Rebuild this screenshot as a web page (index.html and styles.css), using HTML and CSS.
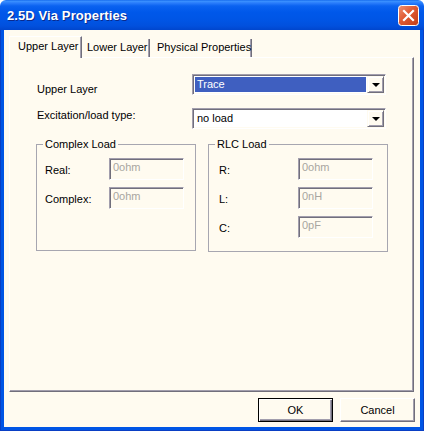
FILE: index.html
```html
<!DOCTYPE html>
<html>
<head>
<meta charset="utf-8">
<link rel="stylesheet" href="styles.css">
</head>
<body>
<div class="window">
  <div class="titlebar">
    <span class="title">2.5D Via Properties</span>
    <span class="close">
      <svg width="21" height="21" viewBox="0 0 21 21">
        <defs>
          <linearGradient id="cg" x1="0" y1="0" x2="1" y2="1">
            <stop offset="0" stop-color="#f09272"/>
            <stop offset="0.45" stop-color="#e05a32"/>
            <stop offset="1" stop-color="#c13c16"/>
          </linearGradient>
        </defs>
        <rect x="0.5" y="0.5" width="20" height="20" rx="3" fill="url(#cg)" stroke="#ffffff"/>
        <path d="M6 6 L15 15 M15 6 L6 15" stroke="#ffffff" stroke-width="2.2" stroke-linecap="square"/>
      </svg>
    </span>
  </div>
  <div class="frame">
    <div class="client">
      <div class="tabs">
        <div class="tab active">Upper Layer</div>
        <div class="tab t2">Lower Layer</div>
        <div class="tab t3">Physical Properties</div>
      </div>
      <div class="panel">
        <div class="row r1">
          <span class="lbl l1">Upper Layer</span>
          <div class="select">
            <span class="sel-text hl">Trace</span>
            <span class="drop"><span class="arrow"></span></span>
          </div>
        </div>
        <div class="row r2">
          <span class="lbl l2">Excitation/load type:</span>
          <div class="select">
            <span class="sel-text">no load</span>
            <span class="drop"><span class="arrow"></span></span>
          </div>
        </div>
        <div class="groups">
          <div class="group complex">
            <span class="legend">Complex Load</span>
            <div class="grow"><span class="glbl">Real:</span><span class="edit">0ohm</span></div>
            <div class="grow"><span class="glbl">Complex:</span><span class="edit">0ohm</span></div>
          </div>
          <div class="group rlc">
            <span class="legend">RLC Load</span>
            <div class="grow"><span class="glbl">R:</span><span class="edit">0ohm</span></div>
            <div class="grow"><span class="glbl">L:</span><span class="edit">0nH</span></div>
            <div class="grow"><span class="glbl">C:</span><span class="edit">0pF</span></div>
          </div>
        </div>
      </div>
      <div class="buttons">
        <div class="btn default"><span class="btn-in">OK</span></div>
        <div class="btn"><span class="btn-in">Cancel</span></div>
      </div>
    </div>
  </div>
</div>
</body>
</html>
```

FILE: styles.css
```css
html, body {
  margin: 0;
  padding: 0;
  background: #ffffff;
}
body {
  font-family: "Liberation Sans", Arial, sans-serif;
  font-size: 11px;
  line-height: 13px;
  color: #000;
}
.window {
  width: 424px;
  height: 431px;
  display: flex;
  flex-direction: column;
}
.titlebar {
  height: 30px;
  flex: none;
  display: flex;
  align-items: center;
  justify-content: space-between;
  padding: 0 5px 0 7px;
  box-sizing: border-box;
  background: linear-gradient(#0a5ee8 0px, #3d94ff 1px, #2a7dfb 3px, #0a62f0 6px, #0058ea 12px, #0055e5 20px, #0150dd 26px, #0046cd 30px);
  border-radius: 6px 6px 0 0;
}
.title {
  color: #fff;
  font-weight: bold;
  font-size: 13px;
  letter-spacing: 0.1px;
  text-shadow: 1px 1px 0 #0b2a8c;
  padding-top: 1px;
}
.close {
  display: flex;
  width: 21px;
  height: 21px;
  margin-top: 1px;
}
.frame {
  flex: 1;
  display: flex;
  background: #0055e5;
  border-left: 1px solid #0a3fc4;
  border-right: 1px solid #0a3fc4;
  border-bottom: 1px solid #0a3fc4;
  margin: 0;
  box-sizing: border-box;
  padding: 0 3px 3px 3px;
}
.client {
  flex: 1;
  background: #fffbf0;
  display: flex;
  flex-direction: column;
  padding: 6px 6px 0 5px;
}
.tabs {
  display: flex;
  height: 21px;
  align-items: flex-start;
}
.tab {
  box-sizing: border-box;
  height: 18px;
  margin-top: 3px;
  padding: 2px 0 0 5px;
  border-right: 1px solid #716f7c;
  box-shadow: inset -1px 0 0 #a29ead;
  white-space: nowrap;
}
.tab.active {
  position: relative;
  z-index: 1;
  height: 22px;
  margin-top: 0;
  width: 73px;
  padding: 3px 0 0 8px;
  background: #fffbf0;
  border-left: 1px solid #ffffff;
  border-top: 1px solid #ffffff;
}
.tab.t2 {
  width: 68px;
}
.tab.t3 {
  width: 102px;
  padding-left: 7px;
}
.panel {
  flex: none;
  height: 335px;
  box-sizing: border-box;
  border-top: 1px solid #ffffff;
  border-left: 1px solid #ffffff;
  border-right: 1px solid #716f7c;
  border-bottom: 1px solid #716f7c;
  box-shadow: inset -1px -1px 0 #a29ead;
  padding: 16px 0 0 26px;
}
.row {
  display: flex;
  align-items: flex-start;
}
.r2 {
  margin-top: 12px;
}
.lbl {
  width: 155px;
  margin-left: 1px;
}
.l1 {
  padding-top: 9px;
}
.l2 {
  padding-top: 1px;
}
.select {
  width: 194px;
  height: 21px;
  box-sizing: border-box;
  background: #fff;
  border-top: 1px solid #a29ead;
  border-left: 1px solid #a29ead;
  border-right: 1px solid #ffffff;
  border-bottom: 1px solid #ffffff;
  box-shadow: inset 1px 1px 0 #716f7c, inset -1px -1px 0 #fffbf0;
  padding: 1px;
  display: flex;
}
.sel-text {
  flex: 1;
  margin: 1px;
  padding-left: 2px;
  line-height: 15px;
  height: 15px;
}
.sel-text.hl {
  background: #3f5fc0;
  color: #fff;
}
.drop {
  width: 17px;
  height: 17px;
  box-sizing: border-box;
  background: #fffbf0;
  border-top: 1px solid #fffbf0;
  border-left: 1px solid #fffbf0;
  border-right: 1px solid #716f7c;
  border-bottom: 1px solid #716f7c;
  box-shadow: inset 1px 1px 0 #ffffff, inset -1px -1px 0 #a29ead;
  display: flex;
  align-items: center;
  justify-content: center;
}
.arrow {
  width: 0;
  height: 0;
  border-left: 4px solid transparent;
  border-right: 4px solid transparent;
  border-top: 4px solid #000;
  margin-top: 1px;
}
.groups {
  display: flex;
  gap: 12px;
  margin-top: 15px;
}
.group {
  position: relative;
  box-sizing: border-box;
  border: 1px solid #a7a6b0;
  padding-top: 13px;
  display: flex;
  flex-direction: column;
  gap: 7px;
}
.complex {
  width: 160px;
  height: 107px;
  padding-left: 8px;
}
.rlc {
  width: 180px;
  height: 108px;
  padding-left: 10px;
}
.legend {
  position: absolute;
  top: -7px;
  left: 6px;
  padding: 0 2px;
  background: #fffbf0;
}
.grow {
  display: flex;
  align-items: center;
  height: 22px;
}
.glbl {
  width: 64px;
  padding-top: 2px;
}
.rlc .glbl {
  width: 79px;
}
.edit {
  width: 75px;
  height: 22px;
  box-sizing: border-box;
  border-top: 1px solid #a29ead;
  border-left: 1px solid #a29ead;
  border-right: 1px solid #ffffff;
  border-bottom: 1px solid #ffffff;
  box-shadow: inset 1px 1px 0 #716f7c;
  color: #a8a6a0;
  padding: 2px 0 0 3px;
}
.buttons {
  display: flex;
  justify-content: flex-end;
  gap: 7px;
  margin-top: 6px;
  margin-right: -1px;
}
.btn {
  width: 75px;
  height: 24px;
  box-sizing: border-box;
  border-top: 1px solid #ffffff;
  border-left: 1px solid #ffffff;
  border-right: 1px solid #716f7c;
  border-bottom: 1px solid #716f7c;
  box-shadow: inset -1px -1px 0 #a29ead;
  display: flex;
  align-items: center;
  justify-content: center;
}
.btn.default {
  border: 1px solid #000;
  box-shadow: inset 1px 1px 0 #ffffff, inset -1px -1px 0 #716f7c, inset -2px -2px 0 #a29ead;
}
.btn-in {
  padding-top: 1px;
}
```
